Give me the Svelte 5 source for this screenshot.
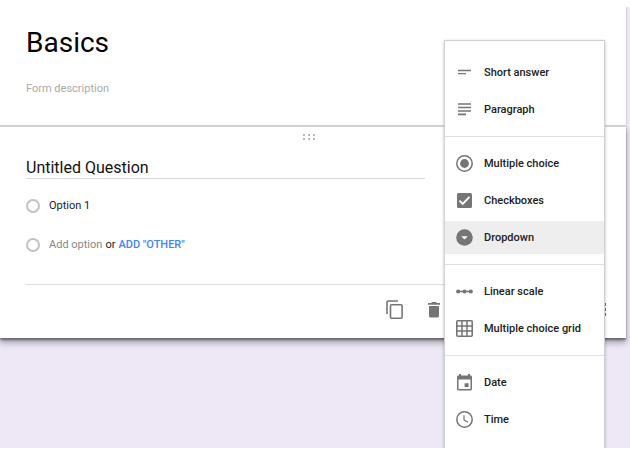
<script>
  const groups = [
    ['Short answer', 'Paragraph'],
    ['Multiple choice', 'Checkboxes', 'Dropdown'],
    ['Linear scale', 'Multiple choice grid'],
    ['Date', 'Time']
  ];

  let title = $state('Basics');
  let description = $state('');
  let question = $state('Untitled Question');
  let option = $state('Option 1');
  let selected = $state('Dropdown');
</script>

{#snippet icon(name)}
  <svg class="icon" viewBox="0 0 17 17" aria-hidden="true">
    {#if name === 'Short answer'}
      <path d="M2 6.5h13M2 9.7h8" stroke="currentColor" stroke-width="1.3" />
    {:else if name === 'Paragraph'}
      <path d="M2 3h13M2 6.5h13M2 10h13M2 13.4h8" stroke="currentColor" stroke-width="1.6" />
    {:else if name === 'Multiple choice'}
      <circle cx="8.5" cy="8.5" r="7.7" fill="none" stroke="currentColor" stroke-width="1.5" />
      <circle cx="8.5" cy="8.5" r="4.4" fill="currentColor" />
    {:else if name === 'Checkboxes'}
      <rect x="1" y="1" width="15" height="15" rx="1.5" fill="currentColor" />
      <path d="M3.4 8.6l3.3 3.3 6.8-7" fill="none" stroke="#fff" stroke-width="1.8" />
    {:else if name === 'Dropdown'}
      <circle cx="8.5" cy="8.5" r="8.3" fill="currentColor" />
      <path d="M5.2 7.2h6.6L8.5 10.4z" fill="#fff" />
    {:else if name === 'Linear scale'}
      <path d="M2 8.5h13" stroke="currentColor" stroke-width="1.5" />
      <circle cx="2.2" cy="8.5" r="2.1" fill="currentColor" />
      <circle cx="8.5" cy="8.5" r="2.1" fill="currentColor" />
      <circle cx="14.8" cy="8.5" r="2.1" fill="currentColor" />
    {:else if name === 'Multiple choice grid'}
      <rect x="0.8" y="0.8" width="15.4" height="15.4" rx="1" fill="none" stroke="currentColor" stroke-width="1.6" />
      <path d="M6 1v15M11 1v15M1 6h15M1 11h15" stroke="currentColor" stroke-width="1.5" />
    {:else if name === 'Date'}
      <path fill-rule="evenodd" d="M3 0h2v1.6h7V0h2v1.6h.6A1.4 1.4 0 0 1 16 3v12a1.4 1.4 0 0 1-1.4 1.4H2.4A1.4 1.4 0 0 1 1 15V3a1.4 1.4 0 0 1 1.4-1.4H3zM2.5 5.6v9.3h12V5.6zM8.6 9.2h4V13h-4z" fill="currentColor" />
    {:else}
      <circle cx="8.5" cy="8.5" r="7.7" fill="none" stroke="currentColor" stroke-width="1.5" />
      <path d="M8 4.2v4.7l4 2.3" fill="none" stroke="currentColor" stroke-width="1.2" />
    {/if}
  </svg>
{/snippet}

<main class="editor">
  <header class="intro">
    <input class="title" aria-label="Form title" bind:value={title} />
    <input class="description" aria-label="Form description" placeholder="Form description" bind:value={description} />
  </header>

  <section class="question">
    <div class="handle">
      <svg width="13" height="7" viewBox="0 0 13 7" aria-hidden="true">
        <path d="M0 0h2v2H0zM5 0h2v2H5zM10 0h2v2h-2zM0 4h2v2H0zM5 4h2v2H5zM10 4h2v2h-2z" fill="#b8b8b8" />
      </svg>
    </div>
    <input class="prompt" aria-label="Question" bind:value={question} />
    <div class="option">
      <input class="radio" type="radio" name="answer" aria-label={option} />
      <input class="text" aria-label="Option text" bind:value={option} />
    </div>
    <div class="option">
      <input class="radio" type="radio" name="answer" aria-label="New option" />
      <button class="add">Add option</button>
      <span>or</span>
      <button class="other">ADD "OTHER"</button>
    </div>
    <footer class="tools">
      <button aria-label="Duplicate">
        <svg width="18" height="20" viewBox="0 0 18 20" aria-hidden="true">
          <path d="M1 14V2.2Q1 1 2.2 1H12" fill="none" stroke="currentColor" stroke-width="1.6" />
          <rect x="4.5" y="4.7" width="11.6" height="13.6" rx="1" fill="none" stroke="currentColor" stroke-width="1.6" />
        </svg>
      </button>
      <button aria-label="Delete">
        <svg width="12" height="16" viewBox="0 0 12 16" aria-hidden="true">
          <path d="M0 1h3.2L4 0h4l.8 1H12v1.8H0zM1 4h10v10a1.5 1.5 0 0 1-1.5 1.5h-7A1.5 1.5 0 0 1 1 14z" fill="currentColor" />
        </svg>
      </button>
      <button class="more" aria-label="More options">
        <svg width="4" height="14" viewBox="0 0 4 14" aria-hidden="true">
          <path d="M0 0h3v3H0zM0 5h3v3H0zM0 10h3v3H0z" fill="currentColor" />
        </svg>
      </button>
    </footer>
  </section>

  <div class="menu" role="menu" aria-label="Question type">
    {#each groups as group}
      <div class="group" role="group">
        {#each group as name}
          <button
            class="item"
            class:active={name === selected}
            role="menuitemradio"
            aria-checked={name === selected}
            onclick={() => (selected = name)}
          >
            {@render icon(name)}
            {name}
          </button>
        {/each}
      </div>
    {/each}
  </div>
</main>

<style>
  :global(body) {
    margin: 0;
    background: #fff;
  }

  .editor {
    position: relative;
    box-sizing: border-box;
    margin-top: 7px;
    padding: 0 4px 110px 0;
    overflow: hidden;
    background: #ede7f6;
    color: #212121;
    font: 11px/16px Roboto, sans-serif;
  }

  input,
  button {
    box-sizing: border-box;
    margin: 0;
    padding: 0;
    border: 0;
    outline: 0;
    background: none;
    color: inherit;
    font: inherit;
  }

  button {
    cursor: pointer;
  }

  svg {
    display: block;
  }

  .intro {
    display: flex;
    flex-direction: column;
    gap: 21px;
    padding: 17px 26px 28px;
    background: #fff;
    box-shadow: 0 0 2px rgba(0, 0, 0, 0.3);
  }

  .title {
    height: 36px;
    color: #000;
    font-size: 28px;
  }

  .description {
    height: 16px;
  }

  .description::placeholder {
    color: #aaa;
    opacity: 1;
  }

  .question {
    position: relative;
    padding: 0 26px;
    border-top: 2px solid #d2d2d2;
    background: #fff;
    box-shadow: 0 2px 2px rgba(0, 0, 0, 0.4), 0 5px 6px rgba(0, 0, 0, 0.3);
  }

  .handle {
    display: flex;
    justify-content: center;
    padding: 7px 8px 16px 0;
  }

  .prompt {
    display: block;
    width: 399px;
    max-width: 100%;
    height: 22px;
    margin-bottom: 14px;
    border-bottom: 1px solid #d8d8d8;
    color: #111;
    font-size: 16px;
  }

  .option {
    display: flex;
    align-items: center;
    height: 26px;
    margin-bottom: 13px;
    gap: 3px;
  }

  .radio {
    flex: none;
    width: 14px;
    height: 14px;
    margin-right: 6px;
    border: 2px solid #c2c2c2;
    border-radius: 50%;
    appearance: none;
  }

  .add {
    color: #888;
  }

  .other {
    color: #4285f4;
    font-weight: 500;
  }

  .tools {
    display: flex;
    box-sizing: border-box;
    align-items: center;
    gap: 24px;
    height: 54px;
    margin-top: 26px;
    padding: 0 0 3px 360px;
    border-top: 1px solid #dcdcdc;
    color: #757575;
  }

  .more {
    margin-left: auto;
    margin-right: -7px;
  }

  .menu {
    position: absolute;
    top: 33px;
    right: 25px;
    box-sizing: border-box;
    width: 161px;
    padding: 5px 0;
    border: 1px solid #d0d0d0;
    background: #fff;
    box-shadow: 0 1px 3px rgba(0, 0, 0, 0.25);
  }

  .group {
    display: flex;
    flex-direction: column;
    gap: 4px;
    padding: 10px 0;
  }

  .group + .group {
    border-top: 1px solid #e0e0e0;
  }

  .item {
    display: flex;
    align-items: center;
    gap: 11px;
    height: 33px;
    padding: 0 11px;
    font-weight: 500;
    white-space: nowrap;
  }

  .item.active {
    background: #eee;
  }

  .icon {
    flex: none;
    width: 17px;
    height: 17px;
    color: #757575;
  }
</style>
